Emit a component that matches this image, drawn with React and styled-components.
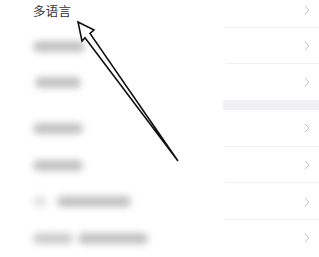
import React from 'react';
import styled, { createGlobalStyle } from 'styled-components';

const GlobalStyle = createGlobalStyle`
  html, body {
    margin: 0;
    padding: 0;
    background: #ffffff;
    overflow: hidden;
  }
  body {
    font-family: "Noto Sans CJK SC", "Noto Sans", sans-serif;
  }
`;

const Page = styled.div`
  position: relative;
  width: 319px;
  height: 257px;
  overflow: hidden;
  background: #ffffff;
`;

const List = styled.div`
  display: flex;
  flex-direction: column;
  margin-top: -8px;
`;

const Row = styled.div`
  position: relative;
  display: flex;
  align-items: center;
  height: ${p => p.h || 36}px;
  padding: 0 9px 0 33px;
  box-sizing: border-box;

  &::after {
    content: '';
    display: ${p => (p.last ? 'none' : 'block')};
    position: absolute;
    left: 225px;
    right: 0;
    bottom: 0;
    height: 1px;
    background: #f0f0f0;
  }
`;

const Label = styled.span`
  flex: 1;
  font-size: 12.5px;
  color: #333333;
  letter-spacing: 0.2px;
`;

const Smudge = styled.div`
  flex: 1;
  display: flex;
  align-items: center;
  gap: 5px;
`;

const Bar = styled.span`
  display: block;
  width: ${p => p.w}px;
  height: 11px;
  margin-left: ${p => p.off || 0}px;
  border-radius: 6px;
  background: ${p => p.tone || '#c2c2c2'};
  filter: blur(3.5px);
`;

const Band = styled.div`
  height: 10px;
  background: linear-gradient(to right, #ffffff 0, #ffffff 222px, #f1f1f3 224px);
`;

const Chevron = () => (
  <svg width="6" height="10" viewBox="0 0 6 10">
    <polyline points="1,1 5,5 1,9" fill="none" stroke="#c2c2c2" strokeWidth="1" />
  </svg>
);

const Annotation = styled.svg`
  position: absolute;
  left: 0;
  top: 0;
  pointer-events: none;
`;

const top = [
  [{ w: 52 }],
  [{ w: 46, off: 2 }],
];

const bottom = [
  [{ w: 50 }],
  [{ w: 50 }],
  [{ w: 14, tone: '#e4e4e4' }, { w: 74, off: 5 }],
  [{ w: 40, tone: '#cdcdcd' }, { w: 70 }],
];

function App() {
  return (
    <Page>
      <GlobalStyle />
      <List>
        <Row>
          <Label>多语言</Label>
          <Chevron />
        </Row>
        {top.map((bars, i) => (
          <Row key={'t' + i} last={i === top.length - 1}>
            <Smudge>
              {bars.map((b, j) => <Bar key={j} {...b} />)}
            </Smudge>
            <Chevron />
          </Row>
        ))}
        <Band />
        {bottom.map((bars, i) => (
          <Row key={'b' + i} h={36.7} last={i === bottom.length - 1}>
            <Smudge>
              {bars.map((b, j) => <Bar key={j} {...b} />)}
            </Smudge>
            <Chevron />
          </Row>
        ))}
      </List>
      <Annotation width="319" height="257" viewBox="0 0 319 257">
        <polygon
          points="78,22 94,30 90,33.5 178,161 85,37.8 82,41"
          fill="#ffffff"
          stroke="#111111"
          strokeWidth="1.6"
          strokeLinejoin="miter"
        />
      </Annotation>
    </Page>
  );
}

export default App;
